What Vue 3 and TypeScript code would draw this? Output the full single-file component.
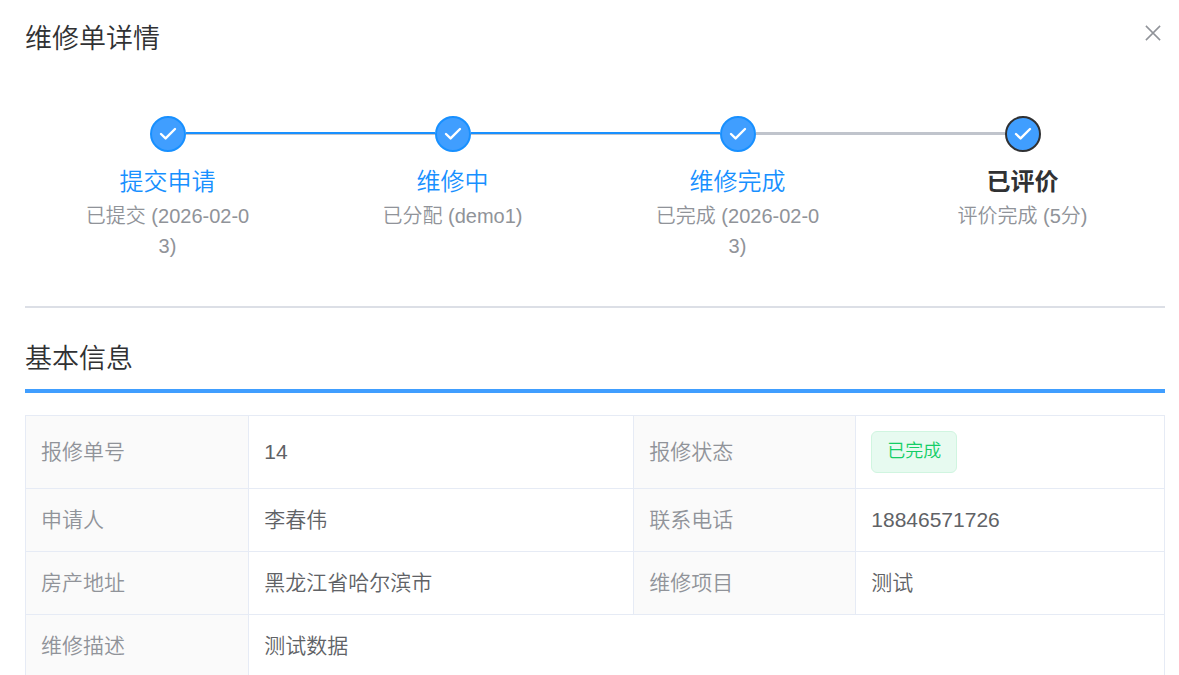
<script setup lang="ts">
import { computed } from 'vue'

interface Step {
  title: string
  description: string
  state: 'finish' | 'process'
}

interface Field {
  label: string
  value: string
  tag?: boolean
  span?: number
}

const steps: Step[] = [
  { title: '提交申请', description: '已提交 (2026-02-03)', state: 'finish' },
  { title: '维修中', description: '已分配 (demo1)', state: 'finish' },
  { title: '维修完成', description: '已完成 (2026-02-03)', state: 'finish' },
  { title: '已评价', description: '评价完成 (5分)', state: 'process' },
]

const rows: Field[][] = [
  [
    { label: '报修单号', value: '14' },
    { label: '报修状态', value: '已完成', tag: true },
  ],
  [
    { label: '申请人', value: '李春伟' },
    { label: '联系电话', value: '18846571726' },
  ],
  [
    { label: '房产地址', value: '黑龙江省哈尔滨市' },
    { label: '维修项目', value: '测试' },
  ],
  [{ label: '维修描述', value: '测试数据', span: 3 }],
]

type Rail = 'none' | 'done' | 'pending'

const railAfter = (i: number): Rail => {
  if (i < 0 || i >= steps.length - 1) return 'none'
  return steps[i + 1].state === 'finish' ? 'done' : 'pending'
}

const items = computed(() =>
  steps.map((s, i) => ({ ...s, before: railAfter(i - 1), after: railAfter(i) })),
)
</script>

<template>
  <main class="dialog">
    <header class="header">
      <h1 class="title">维修单详情</h1>
      <button class="close" type="button" aria-label="关闭">
        <svg width="16" height="16" viewBox="0 0 16 16" fill="none" stroke="currentColor" stroke-width="1.5">
          <path d="M0.9 0.9 15.1 15.1M15.1 0.9 0.9 15.1" />
        </svg>
      </button>
    </header>

    <ol class="steps">
      <li v-for="s in items" :key="s.title" class="step" :class="s.state">
        <div class="head">
          <span class="rail" :class="s.before"></span>
          <span class="dot">
            <svg width="20" height="20" viewBox="0 0 20 20" fill="none" stroke="#fff" stroke-width="2.4" stroke-linecap="round" stroke-linejoin="round">
              <path d="M3 10 7.6 14.4 17 5" />
            </svg>
          </span>
          <span class="rail" :class="s.after"></span>
        </div>
        <div class="name">{{ s.title }}</div>
        <div class="desc">{{ s.description }}</div>
      </li>
    </ol>

    <section class="info">
      <h2 class="section-title">基本信息</h2>
      <table class="table">
        <colgroup>
          <col class="c1" />
          <col class="c2" />
          <col class="c3" />
          <col />
        </colgroup>
        <tbody>
          <tr v-for="(row, r) in rows" :key="r">
            <template v-for="f in row" :key="f.label">
              <th scope="row">{{ f.label }}</th>
              <td :colspan="f.span ?? 1">
                <span v-if="f.tag" class="tag">{{ f.value }}</span>
                <template v-else>{{ f.value }}</template>
              </td>
            </template>
          </tr>
        </tbody>
      </table>
    </section>
  </main>
</template>

<style>
body {
  margin: 0;
  background: #fff;
}
</style>

<style scoped>
.dialog {
  box-sizing: border-box;
  height: 100vh;
  overflow-y: auto;
  scrollbar-width: none;
  padding: 19px 14px 0 25px;
  font-family: 'Liberation Sans', 'Noto Sans CJK SC', sans-serif;
  font-weight: 350;
  color: #606266;
}

.header {
  display: flex;
  justify-content: space-between;
  align-items: flex-start;
}

.title,
.section-title {
  margin: 0;
  font-size: 27px;
  line-height: 40px;
  font-weight: 350;
  color: #303133;
}

.close {
  display: flex;
  padding: 6px 4px;
  border: 0;
  background: none;
  color: #909399;
  cursor: pointer;
}

.steps {
  display: flex;
  margin: 0;
  padding: 57px 0 45px;
  list-style: none;
  border-bottom: 2px solid #dcdfe6;
}

.step {
  flex: 1;
  text-align: center;
  color: #1890ff;
}

.step.process {
  color: #303133;
}

.head {
  display: flex;
  align-items: center;
}

.rail {
  flex: 1;
  height: 4px;
}

.rail.done {
  background: linear-gradient(#1890ff 2px, #c0c4cc 2px 3px, transparent 3px);
}

.rail.pending {
  background: linear-gradient(#c0c4cc 3px, transparent 3px);
}

.dot {
  box-sizing: border-box;
  display: flex;
  align-items: center;
  justify-content: center;
  width: 36px;
  height: 36px;
  border: 2px solid currentColor;
  border-radius: 50%;
  background: #409eff;
}

.name {
  margin-top: 11px;
  font-size: 24px;
  line-height: 38px;
}

.process .name {
  font-weight: 700;
}

.desc {
  padding: 0 20%;
  font-size: 20px;
  line-height: 30px;
  word-break: break-all;
  color: #909399;
}

.info {
  padding-top: 31px;
}

.section-title {
  padding-bottom: 10px;
  border-bottom: 4px solid #409eff;
}

.table {
  width: 100%;
  margin-top: 22px;
  table-layout: fixed;
  border-collapse: collapse;
  font-size: 21px;
  line-height: 32px;
}

.c1 {
  width: 19.6%;
}

.c2 {
  width: 33.8%;
}

.c3 {
  width: 19.5%;
}

th,
td {
  padding: 15px;
  border: 1px solid #e6ebf5;
  font-weight: 350;
  text-align: left;
}

th {
  background: #fafafa;
  color: #909399;
}

.tag {
  display: inline-block;
  box-sizing: border-box;
  height: 42px;
  padding: 0 15px;
  border: 1px solid #d0f5e0;
  border-radius: 6px;
  background: #e7faf0;
  color: #13ce66;
  font-size: 18px;
  line-height: 38px;
  vertical-align: top;
}
</style>
